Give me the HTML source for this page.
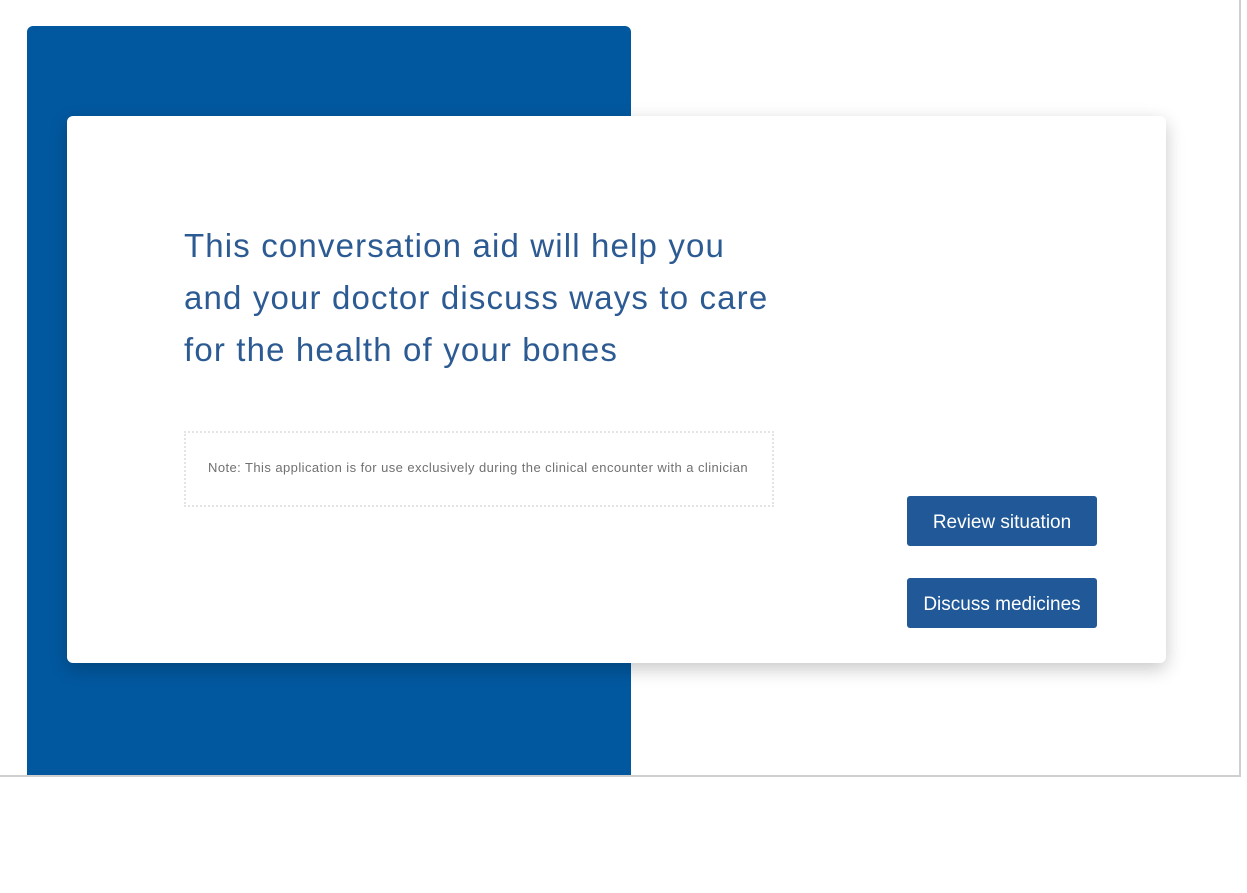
<!DOCTYPE html>
<html><head><meta charset="utf-8"><style>
html,body{margin:0;padding:0;background:#fff;width:1247px;height:893px;overflow:hidden;font-family:"Liberation Sans",Arial,sans-serif;}
.frame{position:absolute;left:0;top:0;width:1239px;height:775px;border-right:2px solid #cfcfcf;border-bottom:2px solid #cfcfcf;overflow:hidden;}
.blue{position:absolute;left:27px;top:26px;width:604px;height:760px;background:#02589f;border-radius:6px 6px 0 0;}
.card{position:absolute;left:67px;top:116px;width:1099px;height:547px;background:#fff;border-radius:6px;box-shadow:0 6px 18px rgba(0,0,0,0.22);}
h1{position:absolute;left:117px;top:104px;margin:0;font-weight:normal;font-size:33px;line-height:52px;color:#2c5a92;width:700px;letter-spacing:1.15px;}
.note{position:absolute;left:117px;top:315px;width:586px;height:72px;border:2px dotted #e4e4e4;}
.note span{position:absolute;left:22px;top:27px;font-size:13px;letter-spacing:0.43px;color:#707070;white-space:nowrap;}
.btn{position:absolute;left:840px;width:190px;height:50px;background:#215897;color:#fff;border-radius:3px;font-size:19px;line-height:54px;text-align:center;}
</style></head><body>
<div class="frame">
<div class="blue"></div>
<div class="card">
<h1>This conversation aid will help you<br>and your doctor discuss ways to care<br>for the health of your bones</h1>
<div class="note"><span>Note: This application is for use exclusively during the clinical encounter with a clinician</span></div>
<div class="btn" style="top:380px">Review situation</div>
<div class="btn" style="top:462px">Discuss medicines</div>
</div>
</div>
</body></html>
